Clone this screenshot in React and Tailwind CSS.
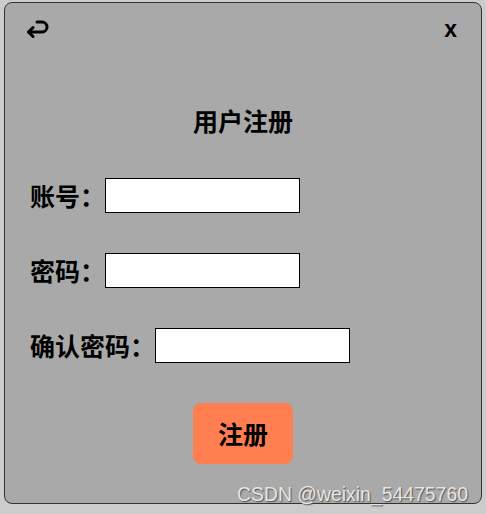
export default function App() {
  return (
    <div className="relative w-[486px] h-[514px] bg-[#cccccc] pt-[2px] pl-[4px] font-['Noto_Sans_CJK_SC',sans-serif] overflow-hidden">
      <div className="w-[478px] h-[502px] rounded-lg border border-[#333] bg-[#a9a9a9] flex flex-col">
        {/* top bar */}
        <div className="flex justify-between items-start h-[50px] pl-[20px] pr-[24px] pt-[15px]">
          <svg width="24" height="20" viewBox="0 0 24 20" fill="none" stroke="black" strokeWidth="3" strokeLinecap="round" strokeLinejoin="round">
            <path d="M12 4 H17 A5 5 0 0 1 17 14 H3.5" />
            <path d="M8 9.5 L3.5 14 L8 18.5" />
          </svg>
          <span className="font-['Liberation_Sans',sans-serif] font-bold text-[23px] leading-none">x</span>
        </div>

        <h1 className="mt-[51px] text-center text-[25px] leading-[32px] font-bold">用户注册</h1>

        <div className="flex flex-col gap-10 mt-[42px] pl-[25px]">
          <div className="flex items-center">
            <label className="text-[25px] font-bold leading-none">账号：</label>
            <input className="w-[195px] h-[35px] border border-black bg-white outline-none" />
          </div>
          <div className="flex items-center">
            <label className="text-[25px] font-bold leading-none">密码：</label>
            <input type="password" className="w-[195px] h-[35px] border border-black bg-white outline-none" />
          </div>
          <div className="flex items-center">
            <label className="text-[25px] font-bold leading-none">确认密码：</label>
            <input type="password" className="w-[195px] h-[35px] border border-black bg-white outline-none" />
          </div>
        </div>

        <div className="flex justify-center mt-10">
          <button className="w-[100px] h-[61px] rounded-lg bg-[#ff7f50] text-[25px] font-bold leading-none">注册</button>
        </div>
      </div>

      <span className="absolute left-[237px] top-[485px] font-['Liberation_Sans',sans-serif] text-[19.4px] leading-none text-[#e6e6e6] [text-shadow:1px_1px_1px_#555] whitespace-nowrap">
        CSDN @weixin_54475760
      </span>
    </div>
  );
}
